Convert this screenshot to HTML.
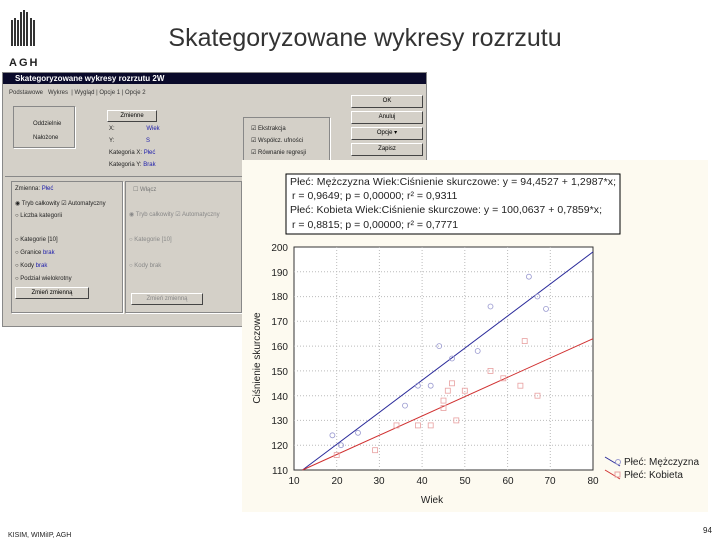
<!DOCTYPE html><html><head><meta charset="utf-8"><style>
body{margin:0;width:720px;height:540px;background:#fff;position:relative;overflow:hidden;font-family:"Liberation Sans",sans-serif}
.a{position:absolute}
.dlg{left:2px;top:72px;width:423px;height:253px;background:#d4d0c8;border:1px solid #888}
.tb{left:0;top:0;width:423px;height:11px;background:#0a0a2a;color:#fff;font-size:8px;font-weight:bold;line-height:11px;padding-left:12px;box-sizing:border-box}
.t{font-size:6px;color:#222;white-space:nowrap}
.b{color:#1a1aaa}
.grp{border:1px solid #888;box-shadow:1px 1px 0 #fff}
.btn{background:#d4d0c8;border:1px solid #fff;border-right-color:#444;border-bottom-color:#444;font-size:6px;text-align:center;line-height:10px}
.tab{font-size:6px;color:#333}
</style></head><body>
<svg class="a" style="left:6px;top:8px" width="40" height="60"><g fill="#333"><rect x="5" y="12" width="2" height="26"/><rect x="8" y="10" width="2" height="28"/><rect x="11" y="12" width="2" height="26"/><rect x="14" y="4" width="2" height="34"/><rect x="17" y="2" width="2" height="36"/><rect x="20" y="4" width="2" height="34"/><rect x="24" y="10" width="2" height="28"/><rect x="27" y="12" width="2" height="26"/></g><text x="3" y="58" font-size="11" font-weight="bold" fill="#222" letter-spacing="2" font-family="Liberation Sans">AGH</text></svg>
<div class="a" style="left:0;width:730px;text-align:center;font-size:25px;color:#333;top:24px">Skategoryzowane wykresy rozrzutu</div>

<div class="a dlg">
<div class="a tb">Skategoryzowane wykresy rozrzutu 2W</div>
<div class="a tab" style="left:6px;top:17px">Podstawowe &nbsp; Wykres &nbsp;| Wygląd | Opcje 1 | Opcje 2</div>
<div class="a grp" style="left:10px;top:33px;width:60px;height:40px"></div>
<div class="a t" style="left:30px;top:48px">Oddzielnie</div><div class="a t" style="left:30px;top:62px">Nałożone</div>
<div class="a btn" style="left:104px;top:37px;width:48px;height:10px">Zmienne</div>
<div class="a t" style="left:106px;top:53px">X: <span class="b" style="margin-left:30px">Wiek</span></div>
<div class="a t" style="left:106px;top:65px">Y: <span class="b" style="margin-left:30px">S</span></div>
<div class="a t" style="left:106px;top:77px">Kategoria X: <span class="b">Płeć</span></div>
<div class="a t" style="left:106px;top:89px">Kategoria Y: <span class="b">Brak</span></div>
<div class="a grp" style="left:240px;top:44px;width:85px;height:45px"></div>
<div class="a t" style="left:248px;top:52px">☑ Ekstrakcja</div><div class="a t" style="left:248px;top:64px">☑ Współcz. ufności</div><div class="a t" style="left:248px;top:76px">☑ Równanie regresji</div>
<div class="a btn" style="left:348px;top:22px;width:70px;height:11px">OK</div>
<div class="a btn" style="left:348px;top:38px;width:70px;height:11px">Anuluj</div>
<div class="a btn" style="left:348px;top:54px;width:70px;height:11px">Opcje ▾</div>
<div class="a btn" style="left:348px;top:70px;width:70px;height:11px">Zapisz</div>
<div class="a" style="left:2px;top:103px;width:420px;border-top:1px solid #888"></div>
<div class="a grp" style="left:8px;top:108px;width:110px;height:130px"></div>
<div class="a grp" style="left:122px;top:108px;width:115px;height:130px"></div>
<div class="a t" style="left:12px;top:113px">Zmienna: <span class="b">Płeć</span></div>
<div class="a t" style="left:12px;top:127px">◉ Tryb całkowity ☑ Automatyczny</div>
<div class="a t" style="left:12px;top:140px">○ Liczba kategorii</div>
<div class="a t" style="left:12px;top:164px">○ Kategorie [10]</div>
<div class="a t" style="left:12px;top:177px">○ Granice <span class="b">brak</span></div>
<div class="a t" style="left:12px;top:190px">○ Kody <span class="b">brak</span></div>
<div class="a t" style="left:12px;top:203px">○ Podział wielokrotny</div>
<div class="a btn" style="left:12px;top:214px;width:72px;height:10px">Zmień zmienną</div>
<div class="a t" style="left:130px;top:113px;color:#777">☐ Włącz</div>
<div class="a t" style="left:126px;top:138px;color:#888">◉ Tryb całkowity ☑ Automatyczny</div>
<div class="a t" style="left:126px;top:164px;color:#888">○ Kategorie [10]</div>
<div class="a t" style="left:126px;top:190px;color:#888">○ Kody brak</div>
<div class="a btn" style="left:128px;top:220px;width:70px;height:10px;color:#888">Zmień zmienną</div>
</div>

<div class="a" style="left:242px;top:160px;width:466px;height:352px;background:#fdfaf0"></div>
<svg class="a" style="left:0;top:0" width="720" height="540" font-family="Liberation Sans">
<rect x="286" y="174" width="334" height="60" fill="#fff" stroke="#000"/>
<g font-size="10.5" fill="#222"><text x="290" y="185" textLength="326">Płeć: Mężczyzna  Wiek:Ciśnienie skurczowe:   y = 94,4527 + 1,2987*x;</text>
<text x="292" y="199">r = 0,9649; p = 0,00000; r² = 0,9311</text>
<text x="290" y="213" textLength="312">Płeć: Kobieta  Wiek:Ciśnienie skurczowe:   y = 100,0637 + 0,7859*x;</text>
<text x="292" y="228">r = 0,8815; p = 0,00000; r² = 0,7771</text></g>
<rect x="294" y="247" width="299" height="223" fill="#fff" stroke="#333"/>
<g stroke="#bbb" stroke-dasharray="1,2"><path d="M336.7 247V470M379.4 247V470M422.1 247V470M464.8 247V470M507.6 247V470M550.3 247V470M294 271.8H593M294 296.6H593M294 321.3H593M294 346.1H593M294 370.9H593M294 395.7H593M294 420.4H593M294 445.2H593"/></g>
<g font-size="10" fill="#222" text-anchor="end"><text x="288" y="251">200</text><text x="288" y="276">190</text><text x="288" y="300">180</text><text x="288" y="325">170</text><text x="288" y="350">160</text><text x="288" y="375">150</text><text x="288" y="400">140</text><text x="288" y="424">130</text><text x="288" y="449">120</text><text x="288" y="474">110</text></g>
<g font-size="10" fill="#222" text-anchor="middle"><text x="294" y="484">10</text><text x="337" y="484">20</text><text x="379" y="484">30</text><text x="422" y="484">40</text><text x="465" y="484">50</text><text x="508" y="484">60</text><text x="550" y="484">70</text><text x="593" y="484">80</text><text x="432" y="503">Wiek</text></g>
<text transform="translate(260,358) rotate(-90)" font-size="10" fill="#222" text-anchor="middle">Ciśnienie skurczowe</text>
<line x1="302.5" y1="470" x2="593" y2="251.9" stroke="#2a2a9a"/>
<line x1="302.5" y1="470" x2="593" y2="338.7" stroke="#d03030"/>
<g fill="none" stroke="#9a9ad0" stroke-width=".8"><circle cx="332.4" cy="435.3" r="2.5"/><circle cx="341" cy="445.2" r="2.5"/><circle cx="358" cy="432.8" r="2.5"/><circle cx="405" cy="405.6" r="2.5"/><circle cx="417.9" cy="385.7" r="2.5"/><circle cx="430.7" cy="385.7" r="2.5"/><circle cx="439.2" cy="346.1" r="2.5"/><circle cx="452" cy="358.5" r="2.5"/><circle cx="477.7" cy="351" r="2.5"/><circle cx="490.5" cy="306.5" r="2.5"/><circle cx="528.9" cy="276.7" r="2.5"/><circle cx="537.4" cy="296.5" r="2.5"/><circle cx="546" cy="308.9" r="2.5"/></g>
<g fill="none" stroke="#e8a0a0" stroke-width=".8"><rect x="334.2" y="452.6" width="5" height="5"/><rect x="372.6" y="447.7" width="5" height="5"/><rect x="394" y="422.9" width="5" height="5"/><rect x="415.4" y="422.9" width="5" height="5"/><rect x="428.2" y="422.9" width="5" height="5"/><rect x="441" y="405.5" width="5" height="5"/><rect x="441" y="398.1" width="5" height="5"/><rect x="445.3" y="388.2" width="5" height="5"/><rect x="449.5" y="380.8" width="5" height="5"/><rect x="453.8" y="417.9" width="5" height="5"/><rect x="462.3" y="388.2" width="5" height="5"/><rect x="488" y="368.4" width="5" height="5"/><rect x="500.8" y="375.8" width="5" height="5"/><rect x="517.9" y="383.2" width="5" height="5"/><rect x="522.2" y="338.6" width="5" height="5"/><rect x="535" y="393.2" width="5" height="5"/></g>
<line x1="605" y1="457" x2="620" y2="466" stroke="#2a2a9a"/><circle cx="618" cy="462" r="2.5" fill="none" stroke="#9a9ad0"/>
<line x1="605" y1="470" x2="620" y2="479" stroke="#d03030"/><rect x="615" y="472" width="5" height="5" fill="none" stroke="#e8a0a0"/>
<g font-size="10" fill="#222"><text x="624" y="465">Płeć: Mężczyzna</text><text x="624" y="478">Płeć: Kobieta</text></g>
<text x="8" y="537" font-size="7" fill="#222">KISIM, WIMiIP, AGH</text>
<text x="703" y="533" font-size="8" fill="#222">94</text>
</svg>
</body></html>
